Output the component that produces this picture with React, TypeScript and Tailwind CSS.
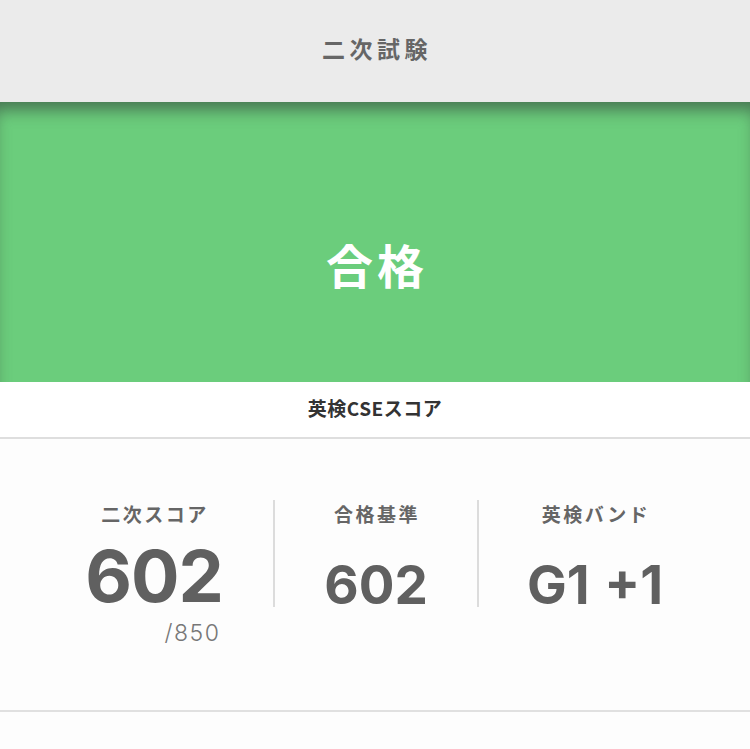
export default function App() {
  return (
    <div className="w-[750px] h-[749px] bg-[#fdfdfd] overflow-hidden [font-family:'Noto_Sans_CJK_JP','Noto_Sans',sans-serif]">
      {/* Title bar */}
      <div className="h-[102px] bg-[#ebebeb] flex items-center justify-center">
        <h1 className="text-[23px] font-bold tracking-[4.5px] text-[#666] pl-[4px] mt-[-6px]">二次試験</h1>
      </div>

      {/* Result banner */}
      <div className="h-[280px] bg-[#6bcd7c] flex items-center justify-center shadow-[inset_0_14px_16px_-6px_rgba(60,90,70,0.75)]">
        <span className="text-[47px] font-bold text-white tracking-[4px] pl-[4px] mt-[44px]">合格</span>
      </div>

      {/* Section heading */}
      <div className="h-[57px] bg-white flex items-center justify-center border-b-2 border-[#dedede]">
        <h2 className="text-[19px] font-bold text-[#333] tracking-[0.5px] mt-[-2px]">英検CSEスコア</h2>
      </div>

      {/* Score columns */}
      <div className="h-[273px] border-b-2 border-[#e0e0e0] pl-[35px] pt-[61px] flex items-start">
        <div className="w-[240px] h-[107px] border-r-2 border-[#dcdcdc] flex flex-col items-center">
          <span className="text-[19px] font-bold text-[#666] tracking-[2.5px] pl-[2px] leading-none mt-[4px]">二次スコア</span>
          <span className="text-[72px] font-bold text-[#606060] leading-none mt-[17px] [font-family:Inter,sans-serif] tracking-[-1px]">602</span>
          <span className="text-[23px] text-[#777] leading-none mt-[10px] ml-[77px] [font-family:Inter,sans-serif] font-light tracking-[1.5px]">/850</span>
        </div>
        <div className="w-[204px] h-[107px] border-r-2 border-[#dcdcdc] flex flex-col items-center">
          <span className="text-[19px] font-bold text-[#666] tracking-[2.5px] pl-[2px] leading-none mt-[4px]">合格基準</span>
          <span className="text-[53px] font-bold text-[#606060] leading-none mt-[36px] [font-family:Inter,sans-serif]">602</span>
        </div>
        <div className="w-[232px] h-[107px] flex flex-col items-center">
          <span className="text-[19px] font-bold text-[#666] tracking-[2.5px] pl-[2px] leading-none mt-[4px]">英検バンド</span>
          <span className="text-[53px] font-bold text-[#606060] leading-none mt-[36px] [font-family:Inter,sans-serif] [word-spacing:2px]">G1 +1</span>
        </div>
      </div>
    </div>
  )
}
